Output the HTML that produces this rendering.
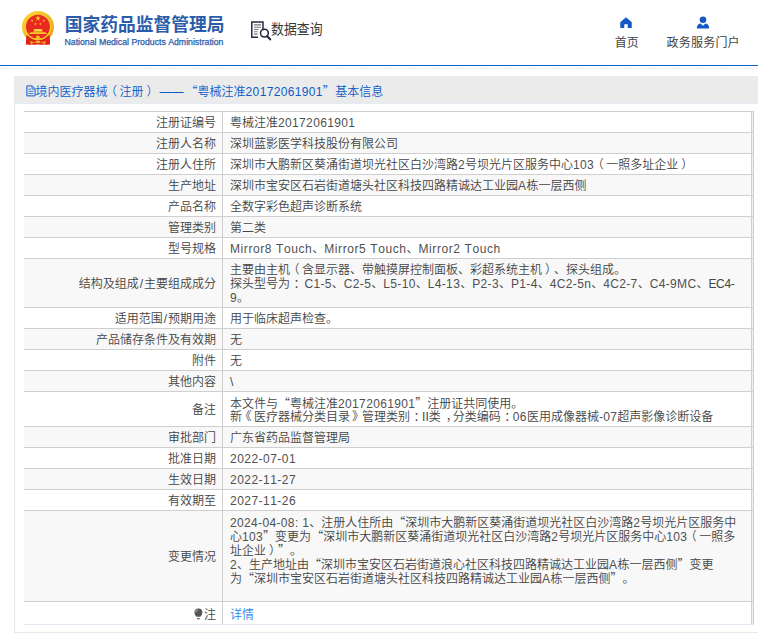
<!DOCTYPE html>
<html lang="zh-CN">
<head>
<meta charset="utf-8">
<title>国家药品监督管理局 数据查询</title>
<style>
html,body{margin:0;padding:0;background:#fff;}
body{width:758px;height:638px;overflow:hidden;position:relative;font-family:"Liberation Sans","Noto Sans CJK SC",sans-serif;font-size:12px;color:#333;text-spacing-trim:space-all;font-kerning:none;}
.abs{position:absolute;}
#hdr{position:absolute;left:0;top:0;width:758px;height:65px;background:#fff;}
#emblem{position:absolute;left:20px;top:8px;width:36px;height:40px;}
#t1{position:absolute;left:64.7px;top:13px;font-size:17.75px;font-weight:bold;color:#2a5caa;line-height:24px;white-space:nowrap;letter-spacing:0;}
#t2{position:absolute;left:64.5px;top:35.5px;font-size:8.72px;color:#2a5caa;-webkit-text-stroke:0.25px #2a5caa;line-height:12px;white-space:nowrap;}
#q{position:absolute;left:270.6px;top:18.5px;font-size:14px;color:#383838;line-height:20px;white-space:nowrap;transform:scaleX(0.92);transform-origin:0 0;}
#qi{position:absolute;left:250px;top:20.8px;width:22px;height:20px;}
.nav{position:absolute;top:34.6px;font-size:12px;line-height:16px;color:#444;white-space:nowrap;}
#blue{position:absolute;left:0;top:65px;width:758px;height:1px;background:#0a60c3;}
#hatch{position:absolute;left:0;top:66px;width:758px;height:4px;}
#panel{position:absolute;left:14px;top:76px;width:760px;height:557px;border:1px solid #e9e9e9;border-top:none;background:#fff;box-sizing:border-box;}
#ph{position:absolute;left:0;top:0;width:760px;height:27px;background:#ebebeb;border-bottom:1px solid #e6eaf4;}
#pt{position:absolute;font-weight:350;line-height:16px;color:#0b5cc8;white-space:nowrap;}
#tb{position:absolute;left:24px;top:111px;width:730px;border-collapse:collapse;table-layout:fixed;}
#tb td{font-weight:350;color:#444;border-top:1px solid #cfcfcf;padding:4px 7px 2px 7px;line-height:14px;vertical-align:middle;white-space:nowrap;}
#tb td.k{width:185px;text-align:right;padding-right:6px;}
#tb td.v{border-left:1px solid #cfcfcf;border-right:1px solid #cfcfcf;}
#tb td.e{width:1px;padding:0;border-right:1px solid #cfcfcf;background:#eef0f6 !important;}
#tb tr:nth-child(even) td{background:#f8f8f8;}
#tb tr.last td{border-bottom:1px solid #e4e8f2;padding-top:6px;padding-bottom:2px;}
.ln{height:14px;line-height:14px;}
.l{letter-spacing:0.35px;}
.d{letter-spacing:0.47px;}
#tb .l,#tb .m,#tb .d{color:#505050;}
.bl{position:relative;left:-2.5px;}
.br{position:relative;left:2px;}
.sl{padding:0 0.9px;}
.cm{position:relative;left:5px;}
.m{letter-spacing:0.58px;}
.cl{position:relative;left:3.5px;}
.c{font-family:"Noto Sans CJK SC",sans-serif;}
.pl{position:relative;left:-2.5px;}
.pr{position:relative;left:3px;}
a{color:#2b85ea;text-decoration:none;}
</style>
</head>
<body>
<div id="hdr">
<svg id="emblem" viewBox="0 0 36 40">
<defs><linearGradient id="gg" x1="0.15" y1="0.1" x2="0.85" y2="0.9"><stop offset="0" stop-color="#fbd336"/><stop offset="0.5" stop-color="#f5bb22"/><stop offset="1" stop-color="#eca01c"/></linearGradient></defs>
<circle cx="17.96" cy="18.9" r="16" fill="url(#gg)"/>
<path d="M6.3 27.6 L29.7 27.6 L30.1 36.5 Q24 37.2 18 36.4 Q12 37.2 5.9 36.5 Z" fill="#df2318"/>
<circle cx="17.96" cy="18.9" r="13.3" fill="#f9cf2e"/>
<circle cx="17.96" cy="18.7" r="12" fill="#e9281f"/>
<polygon points="17.96,7.30 18.68,9.21 20.72,9.30 19.12,10.58 19.66,12.55 17.96,11.42 16.26,12.55 16.80,10.58 15.20,9.30 17.24,9.21" fill="#f5cb25"/>
<polygon points="12.85,11.40 12.68,12.44 13.57,13.01 12.52,13.17 12.26,14.19 11.79,13.25 10.73,13.31 11.48,12.57 11.10,11.59 12.03,12.07" fill="#f5cb25"/><polygon points="23.08,11.40 23.90,12.07 24.83,11.59 24.45,12.57 25.20,13.31 24.14,13.25 23.67,14.19 23.41,13.17 22.36,13.01 23.25,12.44" fill="#f5cb25"/>
<polygon points="15.76,14.49 15.95,15.53 16.99,15.76 16.06,16.27 16.16,17.32 15.39,16.59 14.42,17.01 14.88,16.06 14.18,15.27 15.22,15.40" fill="#f5cb25"/><polygon points="20.14,14.49 20.68,15.40 21.72,15.27 21.02,16.06 21.48,17.01 20.51,16.59 19.74,17.32 19.84,16.27 18.91,15.76 19.95,15.53" fill="#f5cb25"/>
<path d="M13.3 23.2 L14.4 20.9 H21.6 L22.7 23.2 Z" fill="#f6d43a"/>
<path d="M13.6 23.2 H22.4 V24.4 H13.6 Z" fill="#f0b030"/>
<path d="M8.9 26 L10.6 24.2 H25.4 L27.1 26 Z" fill="#f6cc28"/>
<circle cx="17.9" cy="29.4" r="1.9" fill="#f6c52a"/>
<path d="M14.2 30.6 Q17.9 32.6 21.6 30.6" fill="none" stroke="#f6c52a" stroke-width="1.2"/>
<ellipse cx="17.9" cy="34" rx="2.7" ry="1.15" fill="#f3b424"/>
<path d="M10.4 33.2 L12.2 36.6 M25.4 33.2 L23.6 36.6" fill="none" stroke="#f6c32a" stroke-width="1.1"/>
<path d="M11.2 34 L14.6 34.6 M24.6 34 L21.2 34.6" fill="none" stroke="#f6c32a" stroke-width="0.9"/>
</svg>
<div id="t1">国家药品监督管理局</div>
<div id="t2">National Medical Products Administration</div>
<svg id="qi" viewBox="0 0 22 20">
<path d="M13 8 V1 H1.8 V16.2 H8" fill="none" stroke="#2b2b40" stroke-width="1.5"/>
<path d="M4 3.9H11M4 6.2H11M4 8.5H8.6M4 10.8H7.6M4 13.1H7.6" stroke="#77777f" stroke-width="1.1"/>
<circle cx="14.4" cy="12.1" r="3.9" fill="#fff" stroke="#23233a" stroke-width="1.5"/>
<path d="M17.3 15.2 L20.2 18.4" stroke="#23233a" stroke-width="2.1" stroke-linecap="round"/>
</svg>
<div id="q">数据查询</div>
<svg class="abs" style="left:619px;top:16.5px;width:14px;height:11.5px" viewBox="0 0 14 12">
<path d="M7 0.3 L13 5.4 V11.6 H8.8 V7.6 H5.2 V11.6 H1 V5.4 Z" fill="#1559c4"/>
</svg>
<div class="nav" style="left:614.7px;">首页</div>
<svg class="abs" style="left:696px;top:15.6px;width:14px;height:13px" viewBox="0 0 14 13">
<circle cx="7" cy="3.7" r="3.3" fill="#1559c4"/>
<path d="M0.8 12.6 Q0.8 8 4.6 7.6 L7 9.8 L9.4 7.6 Q13.2 8 13.2 12.6 Z" fill="#1559c4"/>
</svg>
<div class="nav" style="left:666.6px;letter-spacing:0.2px;">政务服务门户</div>
</div>
<div id="blue"></div>
<svg id="hatch" viewBox="0 0 758 4">
<defs><pattern id="hp" width="3" height="4" patternUnits="userSpaceOnUse"><path d="M0.2 3 L2.2 1" stroke="#dedede" stroke-width="0.8"/></pattern></defs>
<rect width="758" height="4" fill="url(#hp)"/>
</svg>
<div id="panel">
<div id="ph"></div>
</div>
<svg class="abs" style="left:25.5px;top:84.7px;width:10px;height:12px" viewBox="0 0 10 12">
<path d="M0.9 0.9 H6.2 L9.1 3.8 V10.9 H0.9 Z" fill="none" stroke="#0b5cc8" stroke-width="1"/>
<path d="M6 1 V4 H9" fill="none" stroke="#0b5cc8" stroke-width="0.8"/>
<path d="M2.4 4.2H5M2.4 6.3H7.4M2.4 8.6H7.4" stroke="#0b5cc8" stroke-width="0.8"/>
</svg>
<div id="pt" class="abs" style="left:35.5px;top:82.6px;">境内医疗器械<span class="pl">（</span>注册<span class="pr">）</span><span style="margin-left:4px">——</span><span class="c" style="margin-left:2px">“</span>粤械注准<span class="l">20172061901</span><span class="c">”</span><span style="margin-left:0.3px">基本信息</span></div>
<table id="tb" cellspacing="0" cellpadding="0">
<tr><td class="k">注册证编号</td><td class="v">粤械注准<span class="l">20172061901</span></td><td class="e"></td></tr>
<tr><td class="k">注册人名称</td><td class="v">深圳蓝影医学科技股份有限公司</td><td class="e"></td></tr>
<tr><td class="k">注册人住所</td><td class="v">深圳市大鹏新区葵涌街道坝光社区白沙湾路<span class="l">2</span>号坝光片区服务中心<span class="l">103</span><span class="pl">（</span>一照多址企业<span class="pr">）</span></td><td class="e"></td></tr>
<tr><td class="k">生产地址</td><td class="v">深圳市宝安区石岩街道塘头社区科技四路精诚达工业园<span class="l">A</span>栋一层西侧</td><td class="e"></td></tr>
<tr><td class="k">产品名称</td><td class="v">全数字彩色超声诊断系统</td><td class="e"></td></tr>
<tr><td class="k">管理类别</td><td class="v">第二类</td><td class="e"></td></tr>
<tr><td class="k">型号规格</td><td class="v"><span class="m">Mirror8 Touch</span>、<span class="m">Mirror5 Touch</span>、<span class="m">Mirror2 Touch</span></td><td class="e"></td></tr>
<tr><td class="k">结构及组成<span class="sl">/</span>主要组成成分</td><td class="v"><div class="ln">主要由主机<span class="pl">（</span>含显示器、带触摸屏控制面板、彩超系统主机<span class="pr">）</span>、探头组成。</div><div class="ln">探头型号为<span class="cl" style="margin-right:-1px">：</span> <span class="l">C1-5</span>、<span class="l">C2-5</span>、<span class="l">L5-10</span>、<span class="l">L4-13</span>、<span class="l">P2-3</span>、<span class="l">P1-4</span>、<span class="l">4C2-5n</span>、<span class="l">4C2-7</span>、<span class="l">C4-9MC</span>、<span style="letter-spacing:-0.35px">EC4-</span></div><div class="ln"><span class="l">9</span>。</div></td><td class="e"></td></tr>
<tr><td class="k">适用范围<span class="sl">/</span>预期用途</td><td class="v">用于临床超声检查。</td><td class="e"></td></tr>
<tr><td class="k">产品储存条件及有效期</td><td class="v">无</td><td class="e"></td></tr>
<tr><td class="k">附件</td><td class="v">无</td><td class="e"></td></tr>
<tr><td class="k">其他内容</td><td class="v">\</td><td class="e"></td></tr>
<tr><td class="k">备注</td><td class="v"><div class="ln">本文件与<span class="c">“</span>粤械注准<span class="l">20172061901</span><span class="c">”</span>注册证共同使用。</div><div class="ln">新<span class="bl">《</span>医疗器械分类目录<span class="br">》</span>管理类别<span class="cl">：</span>II类<span class="cm">，</span>分类编码<span class="cl">：</span><span class="l">06</span>医用成像器械<span class="l">-07</span>超声影像诊断设备</div></td><td class="e"></td></tr>
<tr><td class="k">审批部门</td><td class="v">广东省药品监督管理局</td><td class="e"></td></tr>
<tr><td class="k">批准日期</td><td class="v"><span class="d">2022-07-01</span></td><td class="e"></td></tr>
<tr><td class="k">生效日期</td><td class="v"><span class="d">2022-11-27</span></td><td class="e"></td></tr>
<tr><td class="k">有效期至</td><td class="v"><span class="d">2027-11-26</span></td><td class="e"></td></tr>
<tr><td class="k">变更情况</td><td class="v"><div class="ln"><span class="l">2024-04-08: 1</span>、注册人住所由<span class="c">“</span>深圳市大鹏新区葵涌街道坝光社区白沙湾路<span class="l">2</span>号坝光片区服务中</div><div class="ln">心<span class="l">103</span><span class="c">”</span>变更为<span class="c">“</span>深圳市大鹏新区葵涌街道坝光社区白沙湾路<span class="l">2</span>号坝光片区服务中心<span class="l">103</span><span class="pl">（</span>一照多</div><div class="ln">址企业<span class="pr">）</span><span class="c">”</span>。</div><div class="ln"><span class="l">2</span>、生产地址由<span class="c">“</span>深圳市宝安区石岩街道浪心社区科技四路精诚达工业园<span class="l">A</span>栋一层西侧<span class="c">”</span>变更</div><div class="ln">为<span class="c">“</span>深圳市宝安区石岩街道塘头社区科技四路精诚达工业园<span class="l">A</span>栋一层西侧<span class="c">”</span>。</div><div class="ln">&nbsp;</div></td><td class="e"></td></tr>
<tr class="last"><td class="k"><div class="ln">注</div></td><td class="v"><div class="ln"><a>详情</a></div></td><td class="e"></td></tr>
</table>
<svg class="abs" style="left:193.5px;top:607.5px;width:9px;height:12px" viewBox="0 0 9 12">
<path d="M4.4 0.5 A4 4 0 0 1 8.4 4.5 Q8.4 6.6 6.3 8.8 H2.5 Q0.4 6.6 0.4 4.5 A4 4 0 0 1 4.4 0.5 Z" fill="#555558"/>
<path d="M1.6 4.3 A2.9 2.9 0 0 1 3.9 1.8" fill="none" stroke="#dfe6ee" stroke-width="0.7"/>
<rect x="3" y="10.2" width="2.8" height="1.1" fill="#555558"/>
</svg>
</body>
</html>
